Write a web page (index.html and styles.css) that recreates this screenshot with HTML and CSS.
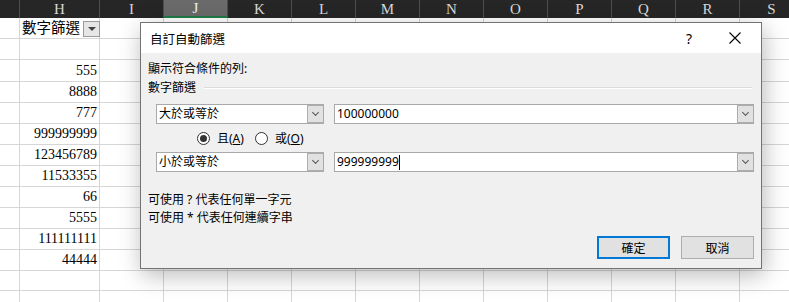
FILE: index.html
```html
<!DOCTYPE html>
<html lang="zh-Hant">
<head>
    <meta charset="UTF-8">
    <title>自訂自動篩選</title>
    <link rel="stylesheet" href="styles.css">
</head>
<body>
<div class="sheet">
    <div class="cols">
        <span></span><span>H</span><span>I</span><span class="sel">J</span><span>K</span><span>L</span><span>M</span>
        <span>N</span><span>O</span><span>P</span><span>Q</span><span>R</span><span>S</span>
    </div>
    <div class="row"><span></span><span class="head">數字篩選<i class="filter-btn"></i></span><span></span><span></span><span></span><span></span><span></span><span></span><span></span><span></span><span></span><span></span><span></span></div>
    <div class="row"><span></span><span></span><span></span><span></span><span></span><span></span><span></span><span></span><span></span><span></span><span></span><span></span><span></span></div>
    <div class="row"><span></span><span class="num">555</span><span></span><span></span><span></span><span></span><span></span><span></span><span></span><span></span><span></span><span></span><span></span></div>
    <div class="row"><span></span><span class="num">8888</span><span></span><span></span><span></span><span></span><span></span><span></span><span></span><span></span><span></span><span></span><span></span></div>
    <div class="row"><span></span><span class="num">777</span><span></span><span></span><span></span><span></span><span></span><span></span><span></span><span></span><span></span><span></span><span></span></div>
    <div class="row"><span></span><span class="num">999999999</span><span></span><span></span><span></span><span></span><span></span><span></span><span></span><span></span><span></span><span></span><span></span></div>
    <div class="row"><span></span><span class="num">123456789</span><span></span><span></span><span></span><span></span><span></span><span></span><span></span><span></span><span></span><span></span><span></span></div>
    <div class="row"><span></span><span class="num">11533355</span><span></span><span></span><span></span><span></span><span></span><span></span><span></span><span></span><span></span><span></span><span></span></div>
    <div class="row"><span></span><span class="num">66</span><span></span><span></span><span></span><span></span><span></span><span></span><span></span><span></span><span></span><span></span><span></span></div>
    <div class="row"><span></span><span class="num">5555</span><span></span><span></span><span></span><span></span><span></span><span></span><span></span><span></span><span></span><span></span><span></span></div>
    <div class="row"><span></span><span class="num">111111111</span><span></span><span></span><span></span><span></span><span></span><span></span><span></span><span></span><span></span><span></span><span></span></div>
    <div class="row"><span></span><span class="num">44444</span><span></span><span></span><span></span><span></span><span></span><span></span><span></span><span></span><span></span><span></span><span></span></div>
    <div class="row"><span></span><span></span><span></span><span></span><span></span><span></span><span></span><span></span><span></span><span></span><span></span><span></span><span></span></div>
    <div class="row"><span></span><span></span><span></span><span></span><span></span><span></span><span></span><span></span><span></span><span></span><span></span><span></span><span></span></div>
</div>

<div class="dialog">
    <div class="titlebar">
        <span class="title">自訂自動篩選</span>
        <span class="help">?</span>
        <span class="close">
            <svg width="12" height="12" viewBox="0 0 12 12"><path d="M0.5 0.5 L11.5 11.5 M11.5 0.5 L0.5 11.5" stroke="#000" stroke-width="1.1" fill="none"/></svg>
        </span>
    </div>
    <div class="body">
        <div class="label">顯示符合條件的列:</div>
        <div class="group"><span>數字篩選</span></div>

        <div class="criteria">
            <div class="combo op"><span class="value">大於或等於</span><i class="arrow"></i></div>
            <div class="combo field"><span class="value">100000000</span><i class="arrow"></i></div>
        </div>

        <div class="radios">
            <label class="radio checked"><i></i><span>且(<u>A</u>)</span></label>
            <label class="radio"><i></i><span>或(<u>O</u>)</span></label>
        </div>

        <div class="criteria">
            <div class="combo op"><span class="value">小於或等於</span><i class="arrow"></i></div>
            <div class="combo field"><span class="value">999999999<b class="caret"></b></span><i class="arrow"></i></div>
        </div>

        <div class="hint first">可使用 ? 代表任何單一字元</div>
        <div class="hint">可使用 * 代表任何連續字串</div>

        <div class="buttons">
            <button class="default">確定</button>
            <button>取消</button>
        </div>
    </div>
</div>
</body>
</html>
```

FILE: styles.css
```css
body {
    margin: 0;
    width: 789px;
    height: 302px;
    overflow: hidden;
    background: #ffffff;
    position: relative;
}

/* Spreadsheet grid */
.sheet {
    width: 804px;
}

.cols, .row {
    display: grid;
    grid-template-columns: 20px 80px repeat(11, 64px);
}

.cols {
    height: 18px;
    background: #262626;
}

.cols span {
    box-sizing: border-box;
    border-right: 1px solid #4d4d4d;
    color: #d8d8d8;
    font-family: "Liberation Serif", "DejaVu Serif", serif;
    font-size: 15px;
    line-height: 18px;
    text-align: center;
}

.cols span.sel {
    background: #6a6a6a;
    color: #f2f2f2;
    border-bottom: 2px solid #1e7b46;
    line-height: 16px;
}

.row {
    height: 21px;
}

.row span {
    box-sizing: border-box;
    border-right: 1px solid #d6d6d6;
    border-bottom: 1px solid #d6d6d6;
    font-family: "Liberation Serif", "Noto Sans CJK TC", serif;
    font-size: 14px;
    line-height: 21px;
    color: #000;
    white-space: nowrap;
}

.row span.num {
    text-align: right;
    padding-right: 2px;
}

.row span.head {
    position: relative;
    font-size: 14.5px;
    padding-left: 2px;
    line-height: 20px;
}

.filter-btn {
    position: absolute;
    left: 63px;
    top: 3px;
    width: 15px;
    height: 14px;
    background: #e6e6e6;
    border: 1px solid #9a9a9a;
}

.filter-btn::after {
    content: "";
    position: absolute;
    left: 4px;
    top: 5px;
    border-left: 4px solid transparent;
    border-right: 4px solid transparent;
    border-top: 4px solid #444;
}

/* Dialog */
.dialog {
    position: absolute;
    left: 140px;
    top: 22px;
    width: 622px;
    box-sizing: border-box;
    border: 1px solid #737373;
    background: #f0f0f0;
    box-shadow: 2px 6px 22px rgba(0, 0, 0, 0.28);
    font-family: "Noto Sans", "Noto Sans CJK TC", sans-serif;
    font-size: 12px;
    color: #000;
}

.titlebar {
    height: 30px;
    background: #ffffff;
    display: flex;
    align-items: center;
    padding-left: 9px;
}

.title {
    flex: 1;
    font-size: 12.5px;
}

.help {
    width: 20px;
    font-size: 14px;
    text-align: center;
}

.close {
    width: 46px;
    margin-left: 13px;
    display: flex;
    justify-content: center;
    margin-right: 3px;
}

.body {
    padding: 8px 7px 9px 7px;
}

.label, .group, .hint {
    line-height: 16px;
}

.group {
    margin-top: 3px;
    display: flex;
    align-items: center;
}

.group::after {
    content: "";
    flex: 1;
    margin-left: 8px;
    margin-right: 2px;
    border-top: 1px solid #dcdcdc;
    border-bottom: 1px solid #ffffff;
}

.criteria {
    display: flex;
    gap: 10px;
    margin-left: 8px;
    margin-top: 8px;
}

.combo {
    height: 20px;
    box-sizing: border-box;
    border: 1px solid #a9a9a9;
    background: #ffffff;
    display: flex;
    align-items: center;
}

.combo.op {
    width: 168px;
}

.combo.field {
    width: 420px;
}

.combo .value {
    flex: 1;
    padding-left: 2px;
    line-height: 18px;
    display: flex;
    align-items: center;
}

.caret {
    display: inline-block;
    width: 1px;
    height: 15px;
    background: #000;
}

.arrow {
    width: 16px;
    box-sizing: border-box;
    background: #e1e1e1;
    border: 1px solid #adadad;
    border-right: none;
    position: relative;
    align-self: stretch;
}

.arrow::after {
    content: "";
    position: absolute;
    left: 5px;
    top: 4px;
    width: 4px;
    height: 4px;
    border-right: 1px solid #555;
    border-bottom: 1px solid #555;
    transform: rotate(45deg);
}

.radios {
    display: flex;
    gap: 11px;
    margin-left: 49px;
    margin-top: 6px;
    height: 16px;
    align-items: center;
}

.radio {
    display: flex;
    align-items: center;
    gap: 7px;
}

.radio i {
    width: 13px;
    height: 13px;
    box-sizing: border-box;
    border: 1px solid #333;
    border-radius: 50%;
    background: #fff;
    position: relative;
}

.radio.checked i::after {
    content: "";
    position: absolute;
    left: 2px;
    top: 2px;
    width: 7px;
    height: 7px;
    border-radius: 50%;
    background: #333;
}

.radios + .criteria {
    margin-top: 6px;
}

.hint.first {
    margin-top: 20px;
}

.hint {
    margin-top: 2px;
}

.buttons {
    display: flex;
    justify-content: flex-end;
    gap: 11px;
    margin-top: 10px;
}

button {
    width: 73px;
    height: 23px;
    box-sizing: border-box;
    border: 1px solid #adadad;
    background: #e1e1e1;
    font-family: "Noto Sans", "Noto Sans CJK TC", sans-serif;
    font-size: 12px;
    color: #000;
    padding: 0;
}

button.default {
    border: 2px solid #0078d7;
}
```
